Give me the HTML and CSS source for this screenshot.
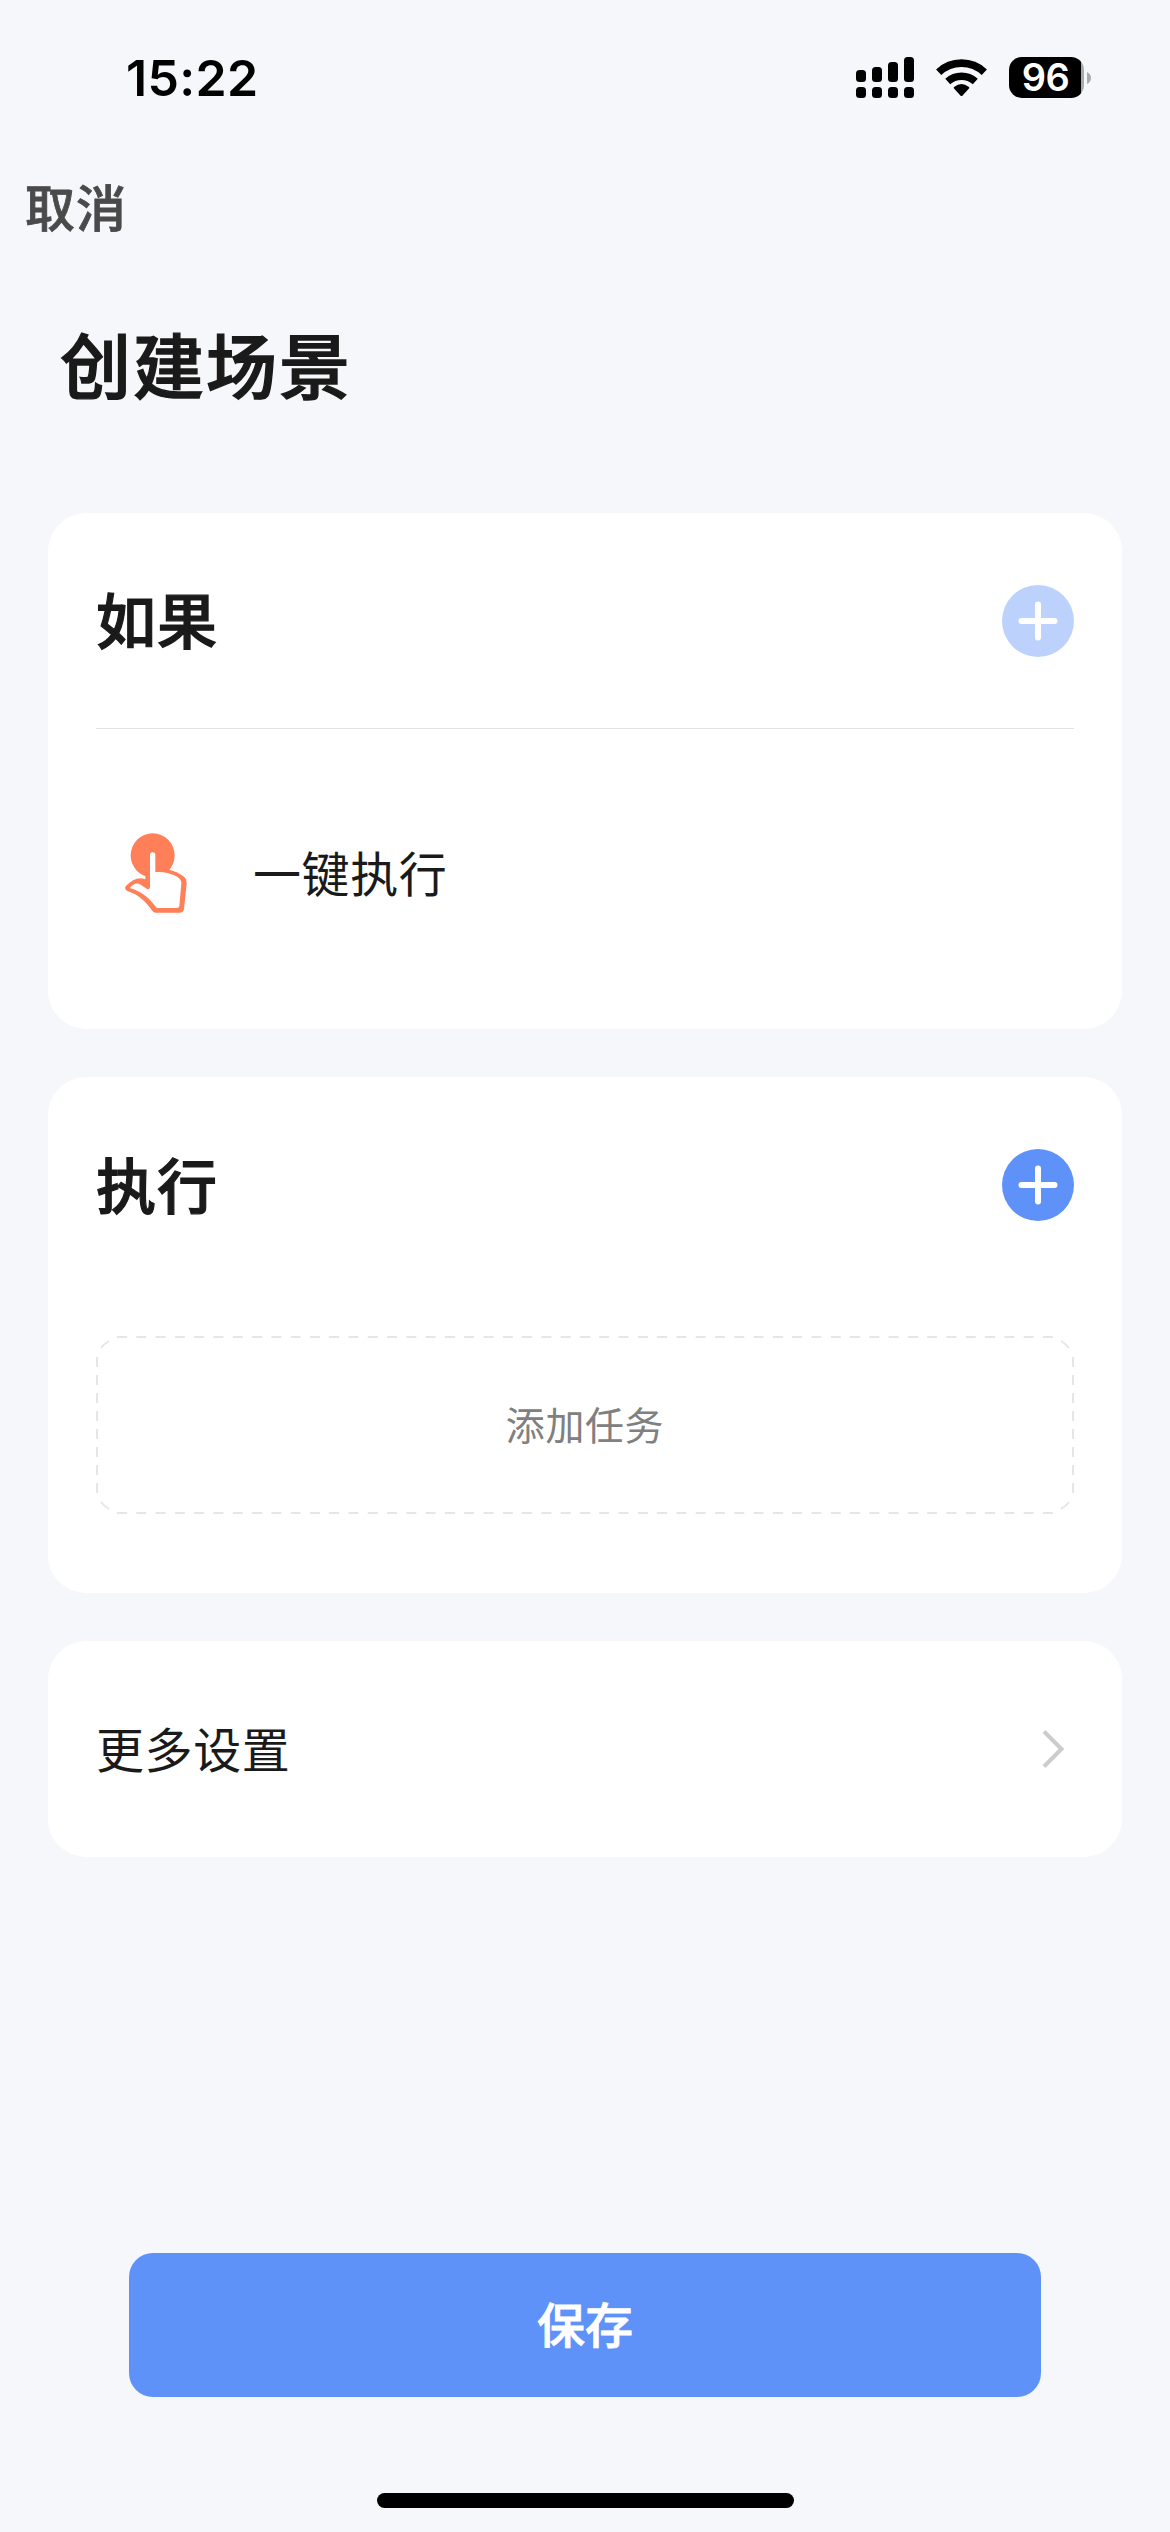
FILE: index.html
```html
<!DOCTYPE html>
<html lang="zh-CN">
<head>
<meta charset="utf-8">
<title>创建场景</title>
<link rel="stylesheet" href="styles.css">
</head>
<body>
<div class="screen">
  <div class="status">
    <span class="time">15:22</span>
    <div class="indicators">
      <svg class="signal" width="58" height="41" viewBox="0 0 58 41">
        <rect x="0" y="13" width="10" height="12" rx="3.5"/>
        <rect x="16" y="10" width="10" height="15" rx="3.5"/>
        <rect x="32" y="5" width="10" height="20" rx="3.5"/>
        <rect x="48" y="0" width="10" height="25" rx="3.5"/>
        <rect x="0" y="30" width="10" height="11" rx="3.5"/>
        <rect x="16" y="30" width="10" height="11" rx="3.5"/>
        <rect x="32" y="30" width="10" height="11" rx="3.5"/>
        <rect x="48" y="30" width="10" height="11" rx="3.5"/>
      </svg>
      <svg class="wifi" width="51" height="38" viewBox="0 0 51 38">
        <path d="M2.7 13.2A33.2 33.2 0 0 1 48.3 13.2" fill="none" stroke="#000" stroke-width="7.6"/>
        <path d="M11.7 22.6A20.6 20.6 0 0 1 39.3 22.6" fill="none" stroke="#000" stroke-width="7.4"/>
        <path d="M17.8 29.2Q17.4 28.5 18.4 27.8Q25.5 22.4 32.6 27.8Q33.6 28.5 33.2 29.2L26.6 36.5Q25.5 37.6 24.4 36.5Z"/>
      </svg>
      <div class="battery">
        <div class="battery-body">96</div>
        <svg width="4" height="12" viewBox="0 0 4 12"><path d="M0 0Q4 2 4 6Q4 10 0 12Z" fill="#a9aaad"/></svg>
      </div>
    </div>
  </div>
  <div class="nav"><span>取消</span></div>
  <h1 class="title">创建场景</h1>

  <div class="cards">
    <section class="card">
      <div class="card-head divided">
        <h2>如果</h2>
        <svg class="add add-muted" viewBox="0 0 72 72"><circle cx="36" cy="36" r="36"/><path d="M36 19.5V52.5M19.5 36H52.5"/></svg>
      </div>
      <div class="condition">
        <svg class="tap" width="62" height="80" viewBox="107 70 186 240">
          <circle cx="190" cy="137" r="66" fill="#ff7f58"/>
          <path fill="#ff7f58" d="M168 190V209C148 201 130 209 109 230Q104 240 114 244C146 254 167 273 190 305Q193 309 199 309H271Q283 308 284 297L292 222Q292 207 282 200C270 190 255 184 240 180Z"/>
          <path fill="#fff" d="M182 136Q182 128 190 128Q198 128 198 136V187C215 187 233 188 243 193C257 197 267 201 273 210Q277 215 276 222L270 289Q269 295 263 295H202C186 273 168 255 145 244Q132 238 122 235C130 223 143 218 154 225L172 237Q181 242 182 232Z"/>
        </svg>
        <span>一键执行</span>
      </div>
    </section>

    <section class="card">
      <div class="card-head">
        <h2>执行</h2>
        <svg class="add" viewBox="0 0 72 72"><circle cx="36" cy="36" r="36"/><path d="M36 19.5V52.5M19.5 36H52.5"/></svg>
      </div>
      <div class="task-box">
        <svg class="dashes" width="978" height="178" viewBox="0 0 978 178">
          <path stroke-dasharray="10 9.29" d="M21 1H957.5M21 177H957.5"/>
          <path stroke-dasharray="10 8" d="M1 21V157.5M977 21V157.5"/>
          <path d="M5 12Q8 8 13 5M973 12Q970 8 965 5M5 166Q8 170 13 173M973 166Q970 170 965 173"/>
        </svg>
        <span>添加任务</span>
      </div>
    </section>

    <section class="card more">
      <span>更多设置</span>
      <svg width="24" height="40" viewBox="0 0 24 40"><path d="M3 2.5L20.5 20L3 37.5" fill="none" stroke="#ccc" stroke-width="4"/></svg>
    </section>
  </div>

  <div class="footer">
    <div class="save">保存</div>
    <div class="home"></div>
  </div>
</div>
</body>
</html>
```

FILE: styles.css
```css
* { box-sizing: border-box; }
body {
  margin: 0;
  background: #f6f7fb;
  color: #1a1a1a;
  font-family: "Noto Sans CJK SC", sans-serif;
}
h1, h2 { margin: 0; }
svg { display: block; flex: none; }
.screen {
  width: 1170px;
  height: 2532px;
  display: flex;
  flex-direction: column;
}
.status {
  height: 141px;
  padding: 14px 79px 0 126px;
  display: flex;
  justify-content: space-between;
  align-items: center;
  font-family: Inter, sans-serif;
  color: #000;
}
.time { font-size: 50px; font-weight: 600; letter-spacing: 0.3px; }
.indicators { display: flex; align-items: center; gap: 22px; }
.battery { display: flex; align-items: center; gap: 3px; }
.battery-body {
  width: 75px;
  height: 41px;
  border-radius: 13px;
  background: linear-gradient(to right, #000 72px, #a9aaad 72px);
  color: #fff;
  font-size: 38px;
  font-weight: 600;
  line-height: 41px;
  text-align: center;
  padding-right: 2px;
  letter-spacing: -0.5px;
}
.nav {
  height: 132px;
  padding: 0 0 4px 25px;
  display: flex;
  align-items: center;
  font-size: 50px;
  font-weight: 500;
  color: #4a4a4b;
  letter-spacing: 1px;
  -webkit-text-stroke: 0.8px;
}
.title {
  height: 186px;
  padding-left: 60px;
  line-height: 179px;
  font-size: 71px;
  font-weight: 500;
  letter-spacing: 2px;
  -webkit-text-stroke: 1.4px;
}
.cards {
  margin-top: 54px;
  padding: 0 48px;
  display: flex;
  flex-direction: column;
  gap: 48px;
}
.card {
  height: 516px;
  padding: 0 48px;
  border-radius: 38px;
  background: #fff;
}
.card-head {
  height: 216px;
  display: flex;
  align-items: center;
  justify-content: space-between;
}
.divided { border-bottom: 1px solid #e2e2e3; }
.card-head h2 {
  padding-bottom: 6px;
  font-size: 60px;
  font-weight: 500;
  letter-spacing: 1px;
  -webkit-text-stroke: 1.2px;
}
.add { width: 72px; height: 72px; fill: #5f92f8; }
.add path { stroke: #fff; stroke-width: 6; stroke-linecap: round; }
.add-muted { fill: #bcd2fd; }
.condition {
  height: 288px;
  padding-left: 29px;
  display: flex;
  align-items: center;
  gap: 66px;
  font-size: 48px;
}
.condition span, .more span { padding-bottom: 5px; letter-spacing: 0.6px; }
.task-box {
  position: relative;
  height: 178px;
  margin-top: 43px;
  padding-bottom: 4px;
  display: flex;
  align-items: center;
  justify-content: center;
  font-size: 39px;
  color: #808080;
  letter-spacing: 0.6px;
}
.dashes {
  position: absolute;
  inset: 0;
  fill: none;
  stroke: #e6e6e6;
  stroke-width: 2;
}
.more {
  height: 216px;
  padding-right: 57px;
  display: flex;
  align-items: center;
  justify-content: space-between;
  font-size: 48px;
}
.footer {
  margin-top: auto;
  padding-bottom: 24px;
  display: flex;
  flex-direction: column;
  align-items: center;
  gap: 96px;
}
.save {
  width: 912px;
  height: 144px;
  border-radius: 24px;
  background: #5f92f8;
  color: #fff;
  font-size: 48px;
  font-weight: 500;
  line-height: 139px;
  text-align: center;
  -webkit-text-stroke: 0.8px;
}
.home { width: 417px; height: 15px; border-radius: 8px; background: #000; }
```
